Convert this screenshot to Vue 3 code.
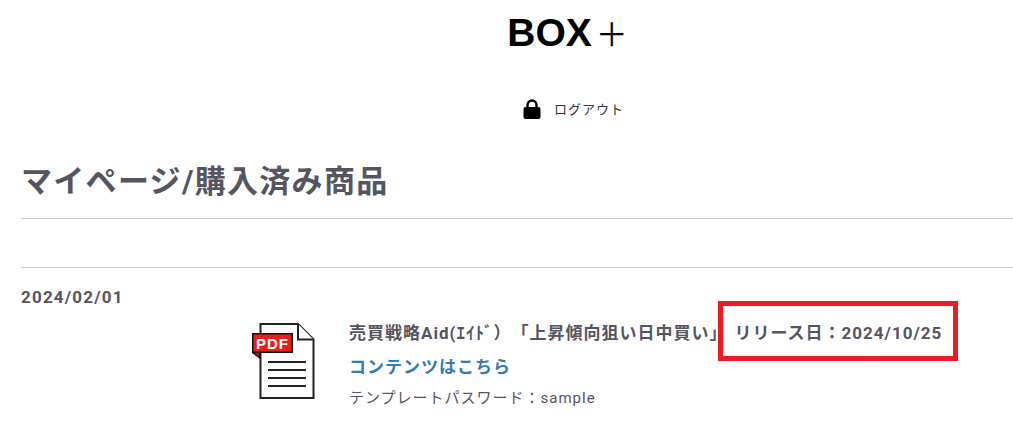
<script setup>
const product = {
  date: '2024/02/01',
  name: '売買戦略Aid(ｴｲﾄﾞ）「上昇傾向狙い日中買い」',
  release: 'リリース日：2024/10/25',
  link: 'コンテンツはこちら',
  note: 'テンプレートパスワード：sample',
}
</script>

<template>
  <div class="page">
    <header class="site-head">
      <h1 class="logo">BOX<span class="plus">＋</span></h1>
      <a class="logout">
        <svg class="lock" viewBox="0 0 18 20" width="18" height="20">
          <path d="M4.500 9V6a4.500 4.500 0 0 1 9 0v3" fill="none" stroke="#000" stroke-width="2.400" />
          <rect x="0.500" y="8" width="17" height="12" rx="2" fill="#000" />
        </svg>
        <span>ログアウト</span>
      </a>
    </header>

    <main class="content">
      <h2 class="title">マイページ/購入済み商品</h2>
      <div class="spacer"></div>
      <p class="date">{{ product.date }}</p>
      <div class="item">
        <svg class="pdf" viewBox="0 0 64 78" width="64" height="78">
          <path d="M8.500 1H46L61.500 16.500V75H8.500Z" fill="#fff" stroke="#222" stroke-width="2" />
          <path d="M46 1V16.500H61.500" fill="#fff" stroke="#222" stroke-width="2" />
          <path d="M0 10H41V30H8V36L0 30Z" fill="#111" />
          <rect x="1.500" y="11.500" width="38" height="17" fill="#ee1c1c" />
          <path d="M2 30H7V34Z" fill="#c01515" />
          <text x="20.500" y="25.500" text-anchor="middle" class="pdf-label">PDF</text>
          <path d="M16 39H54M16 47H54M16 55H54M16 63H54" stroke="#222" stroke-width="2" />
        </svg>
        <div class="info">
          <p class="name">{{ product.name }}<span class="release">{{ product.release }}</span></p>
          <p class="link"><a>{{ product.link }}</a></p>
          <p class="note">{{ product.note }}</p>
        </div>
      </div>
    </main>
    <div class="marker"></div>
  </div>
</template>

<style>
html, body {
  background: #fff;
}
</style>

<style scoped>
.page {
  position: relative;
  height: 436px;
  overflow: hidden;
  font-family: Roboto, "Noto Sans CJK JP", sans-serif;
  color: #555562;
  letter-spacing: 1px;
}
p, h1, h2 {
  margin: 0;
}
.site-head {
  display: flex;
  flex-direction: column;
  align-items: center;
  padding-top: 8px;
  padding-left: 122px;
}
.logo {
  font-family: "Liberation Sans", sans-serif;
  font-size: 39px;
  line-height: 48px;
  letter-spacing: 0;
  color: #000;
  font-weight: 700;
}
.plus {
  font-family: "Noto Sans CJK JP", sans-serif;
  font-weight: 400;
  font-size: 32px;
  margin-left: 4px;
}
.logout {
  display: flex;
  align-items: center;
  gap: 13px;
  margin-top: 41px;
  margin-left: 12px;
  color: #333;
  font-size: 13px;
  height: 21px;
}
.content {
  padding-left: 21px;
}
.title {
  margin-top: 40px;
  font-size: 31px;
  line-height: 46px;
  letter-spacing: 1.3px;
  font-weight: 700;
  padding-bottom: 13px;
  border-bottom: 1px solid #ccc;
}
.spacer {
  height: 48px;
  border-bottom: 1px solid #ccc;
}
.date {
  margin-top: 19px;
  font-size: 17px;
  line-height: 20px;
  letter-spacing: 1.2px;
  font-weight: 700;
}
.item {
  display: flex;
  align-items: flex-start;
  margin-top: 6px;
  padding-left: 231px;
}
.pdf {
  margin-top: 10px;
  flex-shrink: 0;
}
.pdf-label {
  font-family: "Liberation Sans", sans-serif;
  font-size: 15px;
  font-weight: 700;
  fill: #fff;
}
.info {
  margin-left: 33px;
}
.name {
  font-size: 17px;
  line-height: 24px;
  font-weight: 700;
  margin-top: 8px;
  white-space: nowrap;
  text-spacing-trim: space-all;
}
.release {
  margin-left: 7px;
}
.link {
  margin-top: 10px;
  font-size: 17px;
  line-height: 24px;
  font-weight: 700;
  color: #337ab7;
}
.note {
  margin-top: 9px;
  font-size: 15px;
  line-height: 20px;
}
.marker {
  position: absolute;
  left: 718px;
  top: 301px;
  width: 240px;
  height: 60px;
  box-sizing: border-box;
  border: 5px solid #ed1c24;
}
</style>
